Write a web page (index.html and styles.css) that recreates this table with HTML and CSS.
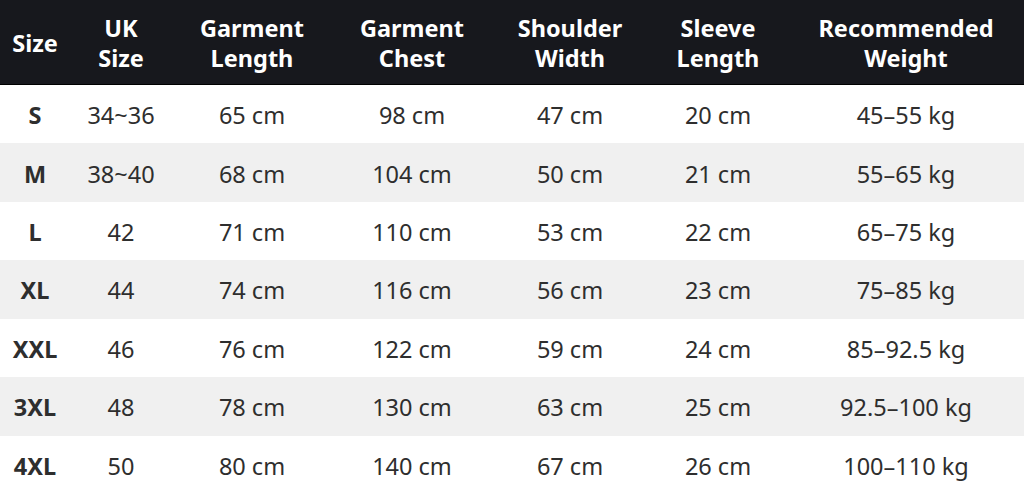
FILE: index.html
```html
<!DOCTYPE html>
<html>
<head>
<meta charset="utf-8">
<link rel="stylesheet" href="styles.css">
</head>
<body>
<table class="chart">
<colgroup>
<col class="c1"><col class="c2"><col class="c3"><col class="c4"><col class="c5"><col class="c6"><col class="c7">
</colgroup>
<thead>
<tr><th>Size</th><th>UK<br>Size</th><th>Garment<br>Length</th><th>Garment<br>Chest</th><th>Shoulder<br>Width</th><th>Sleeve<br>Length</th><th>Recommended<br>Weight</th></tr>
</thead>
<tbody>
<tr><td class="sz">S</td><td>34~36</td><td>65 cm</td><td>98 cm</td><td>47 cm</td><td>20 cm</td><td>45–55 kg</td></tr>
<tr><td class="sz">M</td><td>38~40</td><td>68 cm</td><td>104 cm</td><td>50 cm</td><td>21 cm</td><td>55–65 kg</td></tr>
<tr><td class="sz">L</td><td>42</td><td>71 cm</td><td>110 cm</td><td>53 cm</td><td>22 cm</td><td>65–75 kg</td></tr>
<tr><td class="sz">XL</td><td>44</td><td>74 cm</td><td>116 cm</td><td>56 cm</td><td>23 cm</td><td>75–85 kg</td></tr>
<tr><td class="sz">XXL</td><td>46</td><td>76 cm</td><td>122 cm</td><td>59 cm</td><td>24 cm</td><td>85–92.5 kg</td></tr>
<tr><td class="sz">3XL</td><td>48</td><td>78 cm</td><td>130 cm</td><td>63 cm</td><td>25 cm</td><td>92.5–100 kg</td></tr>
<tr><td class="sz">4XL</td><td>50</td><td>80 cm</td><td>140 cm</td><td>67 cm</td><td>26 cm</td><td>100–110 kg</td></tr>
</tbody>
</table>
</body>
</html>
```
FILE: styles.css
```css
html, body { margin: 0; padding: 0; background: #fff; }
body { width: 1024px; height: 494px; overflow: hidden; font-family: "Noto Sans", "Open Sans", sans-serif; }
.chart { width: 1024px; border-collapse: collapse; table-layout: fixed; }
.c1 { width: 70px; } .c2 { width: 102px; } .c3 { width: 160px; } .c4 { width: 160px; }
.c5 { width: 156px; } .c6 { width: 140px; } .c7 { width: 236px; }
th { background: #17181d; color: #fff; font-weight: 700; font-size: 23.5px; line-height: 30px; height: 82px; padding: 2px 0 0; text-align: center; border-bottom: 1px solid #000; }
td { height: 56.43px; padding: 2px 0 0; text-align: center; font-size: 23.5px; color: #2e2e2e; }
tbody tr:nth-child(even) td { background: #f0f0f0; }
td.sz { font-weight: 700; }
```
